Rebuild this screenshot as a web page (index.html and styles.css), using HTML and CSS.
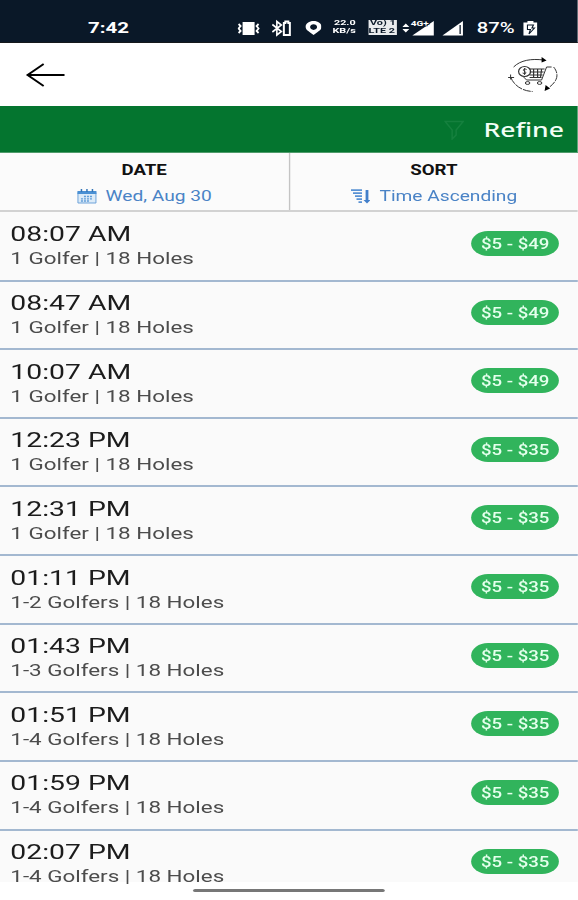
FILE: index.html
```
<!DOCTYPE html>
<html lang="en">
<head>
  <meta charset="UTF-8">
  <title>Tee Times</title>
  <meta name="viewport" content="width=device-width, initial-scale=1">
  <link rel="stylesheet" href="styles.css">
</head>
<body>
  <div class="screen">
    <div class="status">
      <span class="clock">7:42</span>
      <svg class="ic vibrate" viewBox="0 0 22 20" preserveAspectRatio="none">
        <rect x="5" y="4" width="12" height="13" fill="#fff"/>
        <path d="M1 6l2 2-2 2.500 2 2.500-2 2M21 6l-2 2 2 2.500-2 2.500 2 2" fill="none" stroke="#fff" stroke-width="1.800"/>
      </svg>
      <svg class="ic bluetooth" viewBox="0 0 20 20" preserveAspectRatio="none">
        <path d="M1 6.500l9 7-4.500 3.500V3.500l4.500 3.500L1 14" fill="none" stroke="#fff" stroke-width="1.600"/>
        <path d="M14 5V3.500h3V5h1.500v12h-6V5z" fill="none" stroke="#fff" stroke-width="2"/>
      </svg>
      <svg class="ic pin" viewBox="0 0 17 20" preserveAspectRatio="none">
        <path fill-rule="evenodd" d="M8.500 3C4 3 .5 5.500.5 8.800c0 3.700 4.500 5.200 8 8.200 3.500-3 8-4.500 8-8.200C16.500 5.500 13 3 8.500 3zm0 3.300c2 0 3.500 1.200 3.500 2.800s-1.500 2.800-3.500 2.800S5 10.700 5 9.100s1.500-2.800 3.500-2.800z" fill="#fff"/>
      </svg>
      <span class="speed"><b>22.0</b><b>KB/s</b></span>
      <span class="volte"><b>Vo) 1</b><b>LTE 2</b></span>
      <svg class="ic mobile" viewBox="0 0 32 20" preserveAspectRatio="none">
        <path d="M3.500 5.500L7 9H0zM0 11h7l-3.500 3.500zM10 17.500L31.500 3v14.500z" fill="#fff"/>
        <text class="net" x="8.500" y="8.500" textLength="18" lengthAdjust="spacingAndGlyphs">4G+</text>
      </svg>
      <svg class="ic signal" viewBox="0 0 22 20" preserveAspectRatio="none">
        <path d="M1 17.500L21.500 3v14.500z" fill="#fff"/>
        <path d="M18.700 7v9" stroke="#0a1828" stroke-width="1.300"/>
      </svg>
      <span class="percent">87%</span>
      <svg class="ic battery" viewBox="0 0 16 20" preserveAspectRatio="none">
        <path d="M1 4.500h4V3h6v1.500h4v13H1z" fill="#fff"/>
        <path d="M5 7h6l-1.500 3H12l-5.500 6 1.500-4.500H5z" fill="none" stroke="#0a1828" stroke-width="1.100"/>
      </svg>
    </div>

    <div class="header">
      <svg class="back" viewBox="0 0 40 26" preserveAspectRatio="none">
        <path d="M18 2L2 13l16 11M2 13h37" fill="none" stroke="#000" stroke-width="2"/>
      </svg>
      <svg class="cart" viewBox="0 0 52 36" preserveAspectRatio="none">
        <g fill="none" stroke="#333" stroke-width="1">
          <path d="M6 10C13 3 24 1.500 36 3"/>
          <path d="M46 10c5 6 5 13-4 20" stroke-dasharray="7 1"/>
          <path d="M3 20c3 8 11 14 22 14.500" stroke-dasharray="8 1"/>
          <path d="M.5 20.500h6M3 17.500v5M44 10h-5l-5 13H19l-3-3"/>
          <path d="M22 12h15M22 15h14M22 18h13M22 20.500h12M26 12v8M30 12v8M34 12l-1 8" stroke-width="1.200"/>
          <ellipse cx="17" cy="14.500" rx="6" ry="5" stroke-width="1.200"/>
          <path d="M19 12.500c-3-1.500-4.500.8-2 2s1.500 3-2 1.500M17 11v7"/>
          <ellipse cx="20" cy="26" rx="2.300" ry="1.400"/>
          <ellipse cx="32" cy="26" rx="2.300" ry="1.400"/>
        </g>
        <path d="M34 0l5 3.500-5 2zM38 28l-1 6 5.500-2.500z" fill="#000"/>
      </svg>
    </div>

    <div class="refine">
      <svg class="funnel" viewBox="0 0 20 20" preserveAspectRatio="none">
        <path d="M1 1.500h18l-7 8.500v5l-4 4v-9z" fill="none" stroke="#15803e" stroke-width="1.500"/>
      </svg>
      <span>Refine</span>
    </div>

    <div class="tabs">
      <div class="tab date">
        <div class="label">DATE</div>
        <div class="value">
          <svg class="calendar" viewBox="0 0 20 15" preserveAspectRatio="none">
            <path d="M1 3.500h18v10.500H1z" fill="#dcebf8" stroke="#6ea3da"/>
            <path d="M.5 2h19v3H.5z" fill="#4a90d4"/>
            <path d="M4.500 0v3M10 0v3M15.500 0v3" stroke="#3375b8" stroke-width="1.500"/>
            <path d="M7 7.500h9M4 9.800h12M4 12h9" stroke="#609dd8" stroke-width="1.300" stroke-dasharray="2 1"/>
          </svg>
          <span>Wed, Aug 30</span>
        </div>
      </div>
      <div class="tab sort">
        <div class="label">SORT</div>
        <div class="value">
          <svg class="order" viewBox="0 0 20 15" preserveAspectRatio="none">
            <path d="M0 1.200h11M2 4.200h9M4 7.200h7M5.500 10.200H11M7.500 13.200H11" stroke="#5a92d4" stroke-width="1.800"/>
            <path d="M16 1v11" stroke="#427fca" stroke-width="2.800"/>
            <path d="M12.500 11h7L16 14.500z" fill="#427fca"/>
          </svg>
          <span>Time Ascending</span>
        </div>
      </div>
    </div>

    <div class="list">
      <div class="row">
        <div><div class="time">08:07 AM</div><div class="info">1 Golfer | 18 Holes</div></div>
        <div class="price">$5 - $49</div>
      </div>
      <div class="row">
        <div><div class="time">08:47 AM</div><div class="info">1 Golfer | 18 Holes</div></div>
        <div class="price">$5 - $49</div>
      </div>
      <div class="row">
        <div><div class="time">10:07 AM</div><div class="info">1 Golfer | 18 Holes</div></div>
        <div class="price">$5 - $49</div>
      </div>
      <div class="row">
        <div><div class="time">12:23 PM</div><div class="info">1 Golfer | 18 Holes</div></div>
        <div class="price">$5 - $35</div>
      </div>
      <div class="row">
        <div><div class="time">12:31 PM</div><div class="info">1 Golfer | 18 Holes</div></div>
        <div class="price">$5 - $35</div>
      </div>
      <div class="row">
        <div><div class="time">01:11 PM</div><div class="info">1-2 Golfers | 18 Holes</div></div>
        <div class="price">$5 - $35</div>
      </div>
      <div class="row">
        <div><div class="time">01:43 PM</div><div class="info">1-3 Golfers | 18 Holes</div></div>
        <div class="price">$5 - $35</div>
      </div>
      <div class="row">
        <div><div class="time">01:51 PM</div><div class="info">1-4 Golfers | 18 Holes</div></div>
        <div class="price">$5 - $35</div>
      </div>
      <div class="row">
        <div><div class="time">01:59 PM</div><div class="info">1-4 Golfers | 18 Holes</div></div>
        <div class="price">$5 - $35</div>
      </div>
      <div class="row last">
        <div><div class="time">02:07 PM</div><div class="info">1-4 Golfers | 18 Holes</div></div>
        <div class="price">$5 - $35</div>
      </div>
    </div>

    <div class="nav"><div class="handle"></div></div>
  </div>
</body>
</html>
```
FILE: styles.css
```
/* the whole screen is laid out narrow and stretched sideways by --s */
:root {
  --s: 1.35;
}
* {
  box-sizing: border-box;
}
body {
  margin: 0;
  background: #fff;
  overflow: hidden;
}
.screen {
  width: calc(578px / var(--s));
  height: 900px;
  transform: scaleX(var(--s));
  transform-origin: 0 0;
  font-family: Roboto, "Liberation Sans", sans-serif;
  display: flex;
  flex-direction: column;
  overflow: hidden;
}
svg {
  display: block;
  flex: none;
}

/* status bar */
.status {
  height: 43px;
  flex: none;
  background: #0a1828;
  border-bottom: 1px solid #15181c;
  display: flex;
  align-items: center;
  padding-top: 13px;
  padding-left: calc(88px / var(--s));
  color: #fff;
}
.clock {
  width: calc(150px / var(--s));
  font-size: 15.2px;
  font-weight: 700;
}
.ic {
  height: 20px;
}
.vibrate {
  width: calc(22px / var(--s));
}
.bluetooth {
  width: calc(20px / var(--s));
  margin-left: calc(12px / var(--s));
}
.pin {
  width: calc(17px / var(--s));
  margin-left: calc(13px / var(--s));
}
.speed, .volte {
  display: flex;
  flex-direction: column;
  align-items: center;
  justify-content: center;
  height: 15px;
  font-size: 6.4px;
  line-height: 7.5px;
  white-space: nowrap;
}
.speed {
  width: calc(27px / var(--s));
  margin-left: calc(9px / var(--s));
}
.speed b, .volte b {
  transform: scaleX(1.25);
}
.volte {
  width: calc(29px / var(--s));
  margin-left: calc(10px / var(--s));
  background: #e9ebed;
  color: #0a1828;
}
.mobile {
  width: calc(32px / var(--s));
  margin-left: calc(6px / var(--s));
}
.net {
  font-size: 8px;
  font-weight: 700;
  fill: #fff;
  stroke: #0a1828;
  stroke-width: 1.5px;
  paint-order: stroke;
}
.signal {
  width: calc(22px / var(--s));
  margin-left: calc(6px / var(--s));
}
.percent {
  width: calc(45px / var(--s));
  margin-left: calc(14px / var(--s));
  font-size: 15px;
  font-weight: 500;
}
.battery {
  width: calc(16px / var(--s));
}

/* top bar */
.header {
  height: 63px;
  flex: none;
  display: flex;
  align-items: center;
  justify-content: space-between;
  padding: 1px calc(18px / var(--s)) 0 calc(25px / var(--s));
}
.back {
  width: calc(40px / var(--s));
  height: 26px;
}
.cart {
  width: calc(52px / var(--s));
  height: 36px;
}
.refine {
  height: 47px;
  flex: none;
  background: #04752f;
  border-bottom: 1px solid #4f9b6b;
  display: flex;
  align-items: center;
  justify-content: flex-end;
  gap: calc(19px / var(--s));
  padding: 1px calc(14px / var(--s)) 0 0;
  color: #f2fff6;
  font-family: "Noto Sans", sans-serif;
  font-size: 19.7px;
  font-weight: 500;
}
.funnel {
  width: calc(20px / var(--s));
  height: 20px;
}

/* date and sort */
.tabs {
  display: flex;
  height: 59px;
  flex: none;
  background: #fbfbfb;
  border-bottom: 2px solid #d2d2d2;
}
.tab {
  flex: 1;
  padding-top: 9px;
}
.date {
  border-right: 1px solid #c4c4c4;
}
.label {
  text-align: center;
  font-size: 13.8px;
  font-weight: 700;
  line-height: 16px;
  color: #111;
}
.value {
  display: flex;
  align-items: center;
  justify-content: center;
  gap: calc(9px / var(--s));
  margin-top: 9px;
  font-size: 14.2px;
  line-height: 18px;
  color: #4a83c6;
}
.calendar, .order {
  width: calc(20px / var(--s));
  height: 15px;
}

/* tee times */
.list {
  height: 670px;
  flex: none;
  padding-top: 0.9px;
  background: #fafafa;
}
.row {
  display: flex;
  justify-content: space-between;
  height: 68.63px;
  padding: 9.5px calc(18.8px / var(--s)) 0 calc(10.3px / var(--s));
  border-bottom: 2px solid #a3b8d0;
}
.row.last {
  border-bottom: none;
}
.time {
  font-size: 21px;
  line-height: 24px;
  color: #1c1c1c;
}
.info {
  margin-top: 3px;
  font-size: 16.6px;
  line-height: 20px;
  color: #4c4c4c;
}
.price {
  width: calc(88px / var(--s));
  height: 25px;
  margin-top: 8.5px;
  border-radius: 12.5px;
  background: #31b45c;
  color: #e4ffec;
  font-size: 13.8px;
  font-weight: 500;
  line-height: 26px;
  text-align: center;
}
.nav {
  flex: 1;
  padding-top: 7px;
}
.handle {
  width: calc(192px / var(--s));
  height: 3px;
  margin: 0 auto;
  border-radius: 2px;
  background: #777;
}
```
